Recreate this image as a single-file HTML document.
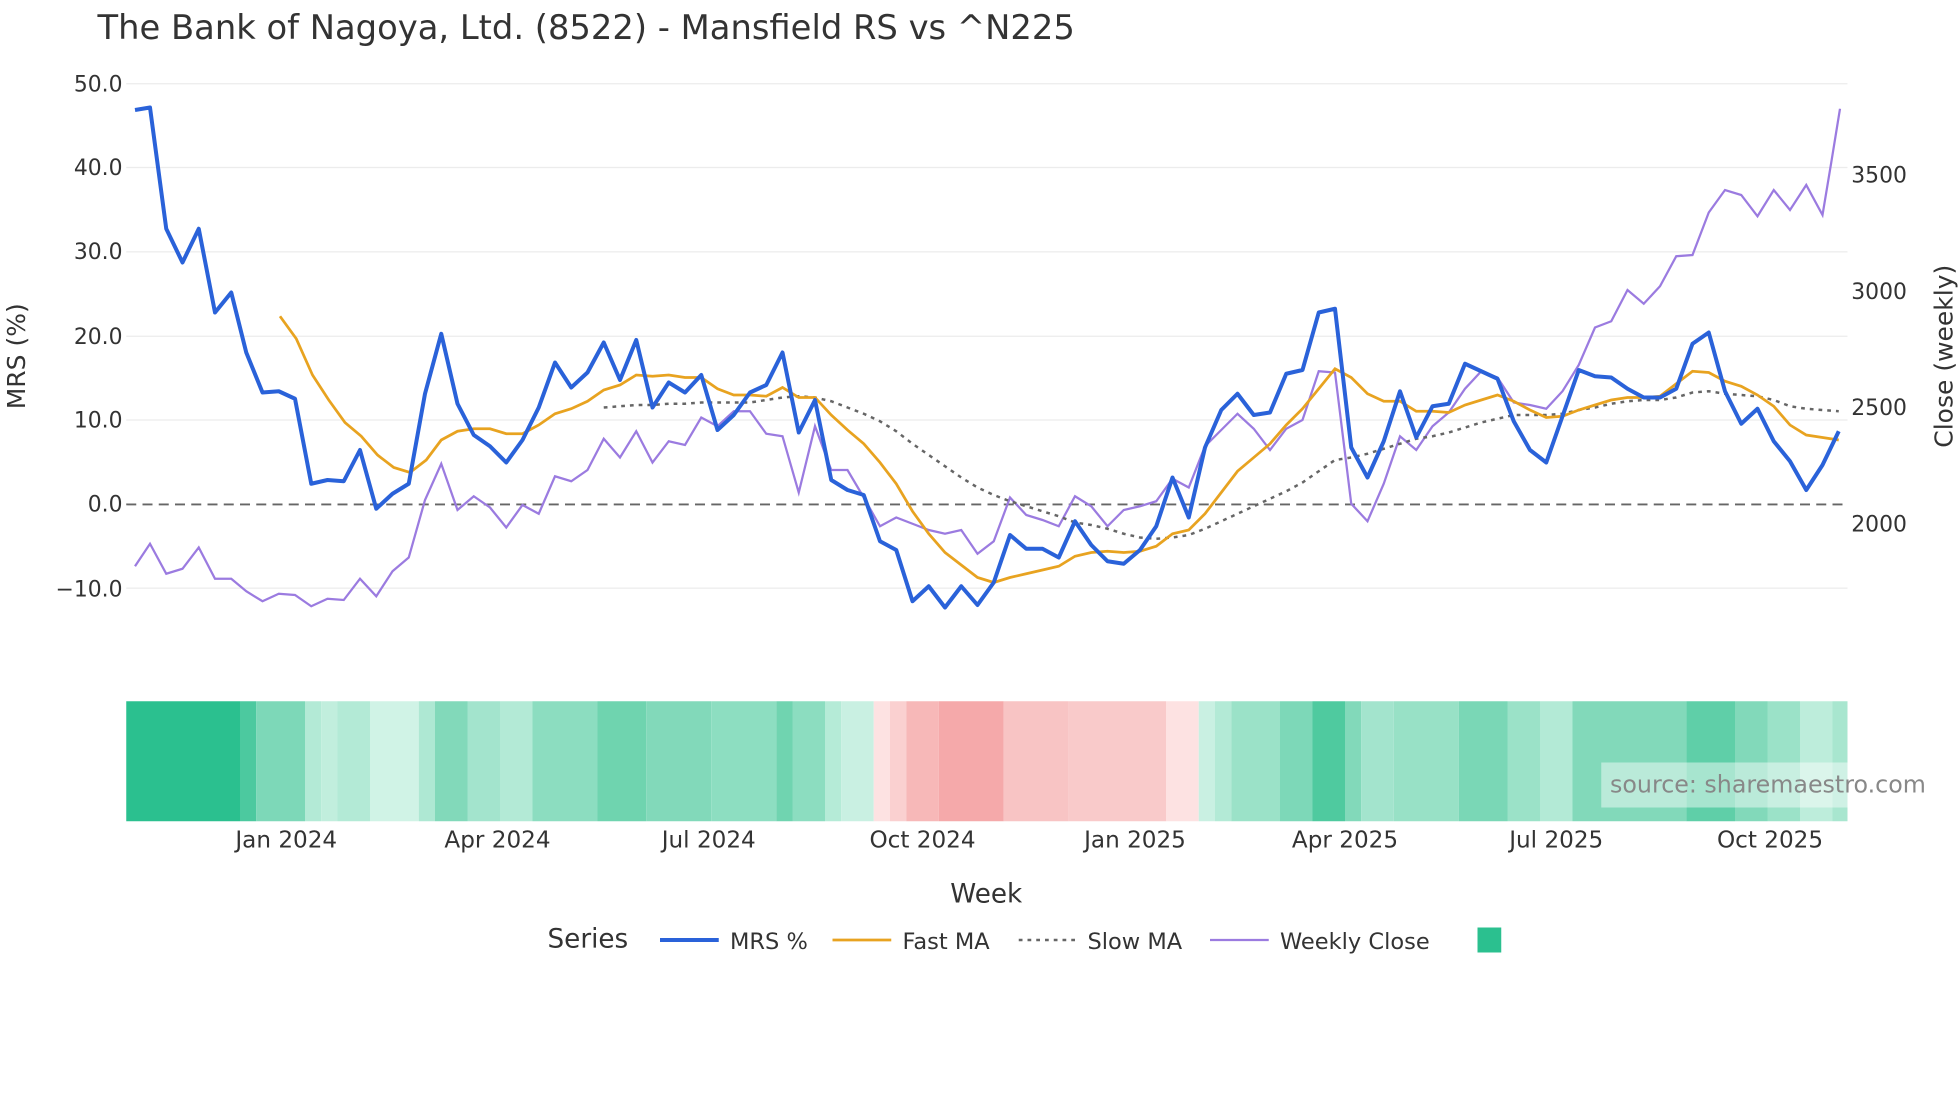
<!DOCTYPE html>
<html><head><meta charset="utf-8"><style>
html,body{margin:0;padding:0;background:#fff;}
svg{display:block;font-family:"DejaVu Sans","Liberation Sans",sans-serif;}
</style></head><body>
<svg width="1960" height="1102" viewBox="0 0 1568 881.6" xmlns="http://www.w3.org/2000/svg">
<rect width="1568" height="882" fill="#fff"/>
<text x="78" y="31" font-size="27" fill="#333">The Bank of Nagoya, Ltd. (8522) - Mansfield RS vs ^N225</text>
<g stroke="#ececec" stroke-width="1">
<line x1="101" x2="1478" y1="67" y2="67"/><line x1="101" x2="1478" y1="134" y2="134"/>
<line x1="101" x2="1478" y1="201.5" y2="201.5"/><line x1="101" x2="1478" y1="269" y2="269"/>
<line x1="101" x2="1478" y1="336" y2="336"/><line x1="101" x2="1478" y1="470.5" y2="470.5"/>
</g>
<line x1="101" x2="1478" y1="403.5" y2="403.5" stroke="#666" stroke-width="1.5" stroke-dasharray="8,5"/>
<g font-size="17.5" fill="#333" text-anchor="end">
<text x="98" y="73">50.0</text><text x="98" y="140">40.0</text><text x="98" y="207">30.0</text>
<text x="98" y="275">20.0</text><text x="98" y="342">10.0</text><text x="98" y="409">0.0</text><text x="98" y="477">−10.0</text>
</g>
<g font-size="17.5" fill="#333">
<text x="1481" y="146">3500</text><text x="1481" y="239">3000</text><text x="1481" y="332">2500</text><text x="1481" y="425">2000</text>
</g>
<text transform="translate(20,285) rotate(-90)" font-size="20" fill="#333" text-anchor="middle">MRS (%)</text>
<text transform="translate(1562,285) rotate(-90)" font-size="20" fill="#333" text-anchor="middle">Close (weekly)</text>
<polyline fill="none" stroke="#9b7be0" stroke-width="1.8" points="108,453 120,435 133,459 146,455 159,438 172,463 185,463 197,473 210,481 223,475 236,476 249,485 262,479 275,480 288,463 301,477 314,457 327,446 340,400 353,371 366,408 379,397 392,406 405,422 418,404 431,411 444,381 457,385 470,376 483,351 496,366 509,345 522,370 535,353 548,356 561,334 574,341 587,329 600,329 613,347 626,349 639,394 652,341 665,376 678,376 691,398 704,421 717,414 730,419 743,424 756,427 769,424 782,443 795,433 808,398 821,412 834,416 847,421 860,397 873,405 886,421 899,408 912,405 925,401 938,383 951,390 964,357 977,344 990,331 1003,343 1016,360 1029,343 1042,336 1055,297 1068,298 1081,403 1094,417 1107,387 1120,349 1133,360 1146,341 1159,330 1172,311 1185,297 1198,302 1211,322 1224,324 1237,327 1250,313 1263,292 1276,262 1289,257 1302,232 1315,243 1328,229 1341,205 1354,204 1367,170 1380,152 1393,156 1406,173 1419,152 1432,168 1445,148 1458,172 1465,130 1472,87"/>
<polyline fill="none" stroke="#666" stroke-width="2" stroke-dasharray="3,4" points="483,326 496,325 509,324 522,324 535,323 548,323 561,322 574,322 587,322 600,322 613,320 626,318 639,317 652,318 665,321 678,326 691,331 704,337 717,345 730,355 743,364 756,373 769,382 782,390 795,396 808,401 821,405 834,409 847,413 860,418 873,420 886,423 899,427 912,430 925,431 938,430 951,428 964,423 977,417 990,411 1003,405 1016,399 1029,393 1042,386 1055,377 1068,368 1081,366 1094,363 1107,359 1120,355 1133,351 1146,349 1159,346 1172,342 1185,338 1198,335 1211,332 1224,332 1237,332 1250,331 1263,328 1276,326 1289,323 1302,321 1315,320 1328,320 1341,318 1354,314 1367,313 1380,315 1393,316 1406,317 1419,320 1432,325 1445,327 1458,328 1471,329"/>
<polyline fill="none" stroke="#e8a320" stroke-width="2.2" points="224,253 237,271 250,300 263,320 276,338 289,349 302,364 315,374 328,378 341,368 353,352 366,345 379,343 392,343 405,347 418,347 431,340 444,331 457,327 470,321 483,312 496,308 509,300 522,301 535,300 548,302 561,302 574,311 587,316 600,316 613,317 626,310 639,318 652,318 665,332 678,344 691,355 704,370 717,387 730,409 743,427 756,442 769,452 782,462 795,466 808,462 821,459 834,456 847,453 860,445 873,442 886,441 899,442 912,441 925,437 938,427 951,424 964,411 977,394 990,377 1003,366 1016,355 1029,340 1042,327 1055,311 1068,295 1081,302 1094,315 1107,321 1120,321 1133,329 1146,329 1159,330 1172,324 1185,320 1198,316 1211,321 1224,328 1237,334 1250,333 1263,328 1276,324 1289,320 1302,318 1315,318 1328,317 1341,307 1354,297 1367,298 1380,305 1393,309 1406,316 1419,325 1432,340 1445,348 1458,350 1471,352"/>
<polyline fill="none" stroke="#2a62d9" stroke-width="3.2" stroke-linejoin="round" points="108,88 120,86 133,183 146,210 159,183 172,250 185,234 197,282 210,314 223,313 236,319 249,387 262,384 275,385 288,360 301,407 314,395 327,387 340,315 353,267 366,323 379,348 392,357 405,370 418,352 431,326 444,290 457,310 470,298 483,274 496,304 509,272 522,326 535,306 548,314 561,300 574,344 587,332 600,314 613,308 626,282 639,346 652,320 665,384 678,392 691,396 704,433 717,440 730,481 743,469 756,486 769,469 782,484 795,466 808,428 821,439 834,439 847,446 860,417 873,436 886,449 899,451 912,440 925,421 938,382 951,414 964,358 977,328 990,315 1003,332 1016,330 1029,299 1042,296 1055,250 1068,247 1081,358 1094,382 1107,353 1120,313 1133,350 1146,325 1159,323 1172,291 1185,297 1198,303 1211,337 1224,360 1237,370 1250,333 1263,296 1276,301 1289,302 1302,311 1315,318 1328,318 1341,311 1354,275 1367,266 1380,313 1393,339 1406,327 1419,353 1432,369 1445,392 1458,372 1471,345"/>
<g>
<rect x="101" y="561" width="91" height="96" fill="#2bc08f"/>
<rect x="192" y="561" width="13" height="96" fill="#4cc99f"/>
<rect x="205" y="561" width="39" height="96" fill="#7dd8b8"/>
<rect x="244" y="561" width="13" height="96" fill="#b3ead6"/>
<rect x="257" y="561" width="13" height="96" fill="#c1eedd"/>
<rect x="270" y="561" width="26" height="96" fill="#b3ead6"/>
<rect x="296" y="561" width="39" height="96" fill="#d0f3e6"/>
<rect x="335" y="561" width="13" height="96" fill="#aee8d3"/>
<rect x="348" y="561" width="26" height="96" fill="#82d9ba"/>
<rect x="374" y="561" width="26" height="96" fill="#a3e4cd"/>
<rect x="400" y="561" width="26" height="96" fill="#b3ead6"/>
<rect x="426" y="561" width="52" height="96" fill="#8cddc0"/>
<rect x="478" y="561" width="39" height="96" fill="#6fd4af"/>
<rect x="517" y="561" width="52" height="96" fill="#82d9ba"/>
<rect x="569" y="561" width="52" height="96" fill="#8ddec1"/>
<rect x="621" y="561" width="13" height="96" fill="#70d4b0"/>
<rect x="634" y="561" width="26" height="96" fill="#8cddc0"/>
<rect x="660" y="561" width="13" height="96" fill="#b5ebd7"/>
<rect x="673" y="561" width="26" height="96" fill="#c9f0e2"/>
<rect x="699" y="561" width="13" height="96" fill="#fde2e2"/>
<rect x="712" y="561" width="13" height="96" fill="#fad0d0"/>
<rect x="725" y="561" width="26" height="96" fill="#f7b8b8"/>
<rect x="751" y="561" width="52" height="96" fill="#f5a9aa"/>
<rect x="803" y="561" width="52" height="96" fill="#f8c4c4"/>
<rect x="855" y="561" width="78" height="96" fill="#f9caca"/>
<rect x="933" y="561" width="26" height="96" fill="#fde2e2"/>
<rect x="959" y="561" width="13" height="96" fill="#c9f0e2"/>
<rect x="972" y="561" width="13" height="96" fill="#b3ead6"/>
<rect x="985" y="561" width="39" height="96" fill="#9be2c8"/>
<rect x="1024" y="561" width="26" height="96" fill="#7dd8b8"/>
<rect x="1050" y="561" width="26" height="96" fill="#4fca9f"/>
<rect x="1076" y="561" width="13" height="96" fill="#82d9ba"/>
<rect x="1089" y="561" width="26" height="96" fill="#a3e4cd"/>
<rect x="1115" y="561" width="52" height="96" fill="#98e1c6"/>
<rect x="1167" y="561" width="39" height="96" fill="#7ad7b6"/>
<rect x="1206" y="561" width="26" height="96" fill="#9be2c8"/>
<rect x="1232" y="561" width="26" height="96" fill="#b3ead6"/>
<rect x="1258" y="561" width="91" height="96" fill="#82d9ba"/>
<rect x="1349" y="561" width="39" height="96" fill="#5fcfa8"/>
<rect x="1388" y="561" width="26" height="96" fill="#82d9ba"/>
<rect x="1414" y="561" width="26" height="96" fill="#9be2c8"/>
<rect x="1440" y="561" width="26" height="96" fill="#bdeddb"/>
<rect x="1466" y="561" width="12" height="96" fill="#a8e6cf"/>
</g>
<rect x="1281" y="610" width="197" height="36" fill="#fff" fill-opacity="0.45"/>
<text x="1288" y="634" font-size="19" fill="#888">source: sharemaestro.com</text>
<g font-size="18.5" fill="#333" text-anchor="middle">
<text x="229" y="678">Jan 2024</text><text x="398" y="678">Apr 2024</text><text x="567" y="678">Jul 2024</text>
<text x="738" y="678">Oct 2024</text><text x="908" y="678">Jan 2025</text><text x="1076" y="678">Apr 2025</text>
<text x="1245" y="678">Jul 2025</text><text x="1416" y="678">Oct 2025</text>
</g>
<text x="789" y="722" font-size="21" fill="#333" text-anchor="middle">Week</text>
<text x="438" y="758" font-size="21" fill="#333">Series</text>
<line x1="528" x2="575" y1="752" y2="752" stroke="#2a62d9" stroke-width="3.2"/>
<text x="584" y="759" font-size="18" fill="#333">MRS %</text>
<line x1="666" x2="713" y1="752" y2="752" stroke="#e8a320" stroke-width="2.2"/>
<text x="722" y="759" font-size="18" fill="#333">Fast MA</text>
<line x1="815" x2="860" y1="752" y2="752" stroke="#666" stroke-width="2" stroke-dasharray="3,4"/>
<text x="870" y="759" font-size="18" fill="#333">Slow MA</text>
<line x1="968" x2="1015" y1="752" y2="752" stroke="#9b7be0" stroke-width="1.8"/>
<text x="1024" y="759" font-size="18" fill="#333">Weekly Close</text>
<rect x="1182" y="742" width="19" height="20" fill="#2bc08f"/>
</svg>
</body></html>
